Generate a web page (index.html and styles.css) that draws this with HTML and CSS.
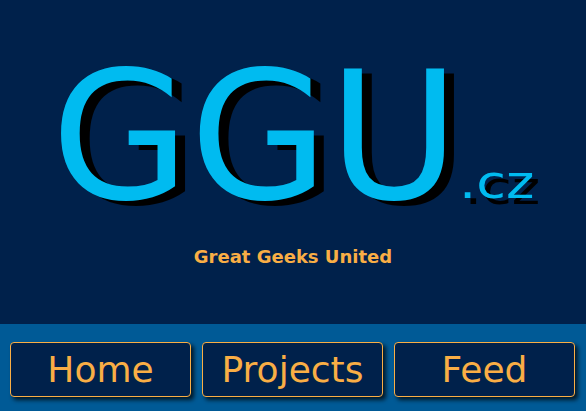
FILE: index.html
```html
<!DOCTYPE html>
<html>
<head>
<meta charset="utf-8">
<link rel="stylesheet" href="styles.css">
</head>
<body>
<header class="masthead">
  <h1 class="logo">GGU<span class="tld">.cz</span></h1>
  <p class="tagline">Great Geeks United</p>
</header>
<nav class="nav">
  <a class="nav-btn" href="#">Home</a>
  <a class="nav-btn" href="#">Projects</a>
  <a class="nav-btn" href="#">Feed</a>
</nav>
</body>
</html>
```
FILE: styles.css
```css
html, body {
  margin: 0;
  padding: 0;
}
body {
  width: 586px;
  height: 411px;
  overflow: hidden;
  background: #00214b;
  font-family: "DejaVu Sans", sans-serif;
}
.masthead {
  height: 324px;
  background: #00214b;
  box-sizing: border-box;
  padding-top: 47px;
  text-align: center;
}
.logo {
  margin: 0;
  font-size: 179px;
  font-weight: normal;
  line-height: 1;
  color: #00bbf0;
  text-shadow: 10px 5px 0 #000;
}
.tld {
  display: inline-block;
  font-size: 47px;
  line-height: 1;
  margin-right: 10px;
  transform: scaleX(1.15);
  transform-origin: left bottom;
  text-shadow: 5px 6px 0 #000;
}
.tagline {
  margin: 20px 0 0;
  font-size: 18px;
  font-weight: bold;
  line-height: 22px;
  color: #f9ae45;
}
.nav {
  height: 87px;
  box-sizing: border-box;
  background: #005a96;
  display: flex;
  gap: 11px;
  padding: 18px 11px 14px 10px;
}
.nav-btn {
  flex: 1;
  display: flex;
  align-items: center;
  justify-content: center;
  background: #00214b;
  border: 1px solid #f9ae45;
  border-radius: 4px;
  box-shadow: 3px 3px 4px rgba(0, 0, 0, 0.75);
  color: #f9ae45;
  font-size: 36px;
  text-decoration: none;
}
```
